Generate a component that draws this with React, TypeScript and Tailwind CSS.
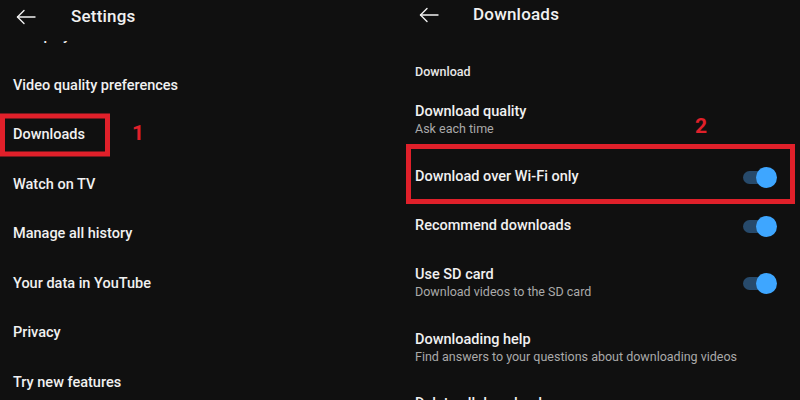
import React from "react";

const font = { fontFamily: "Roboto, 'Noto Sans', Arial, sans-serif" };

function BackArrow() {
  return (
    <svg width="20" height="16" viewBox="0 0 20 16" fill="none" stroke="#f1f1f1" strokeWidth="1.4" strokeLinecap="round" strokeLinejoin="round">
      <path d="M19 8H1.5" />
      <path d="M8 1.5L1.5 8L8 14.5" />
    </svg>
  );
}

function Toggle() {
  return (
    <div className="relative w-[34px] h-[21px] shrink-0">
      <div className="absolute left-0 top-[4px] w-[28px] h-[13px] rounded-full bg-[#274a6b]" />
      <div className="absolute right-0 top-0 w-[21px] h-[21px] rounded-full bg-[#3ea6ff]" />
    </div>
  );
}

const leftRows = [
  "Autoplay",
  "Video quality preferences",
  "Downloads",
  "Watch on TV",
  "Manage all history",
  "Your data in YouTube",
  "Privacy",
  "Try new features",
];

function SettingsPanel() {
  return (
    <div className="relative w-[400px] h-[400px] overflow-hidden bg-[#101010]">
      <div className="relative z-10 h-[41px] bg-[#101010] flex items-start">
        <div className="flex items-center h-[34px] pl-[16px]">
          <BackArrow />
          <span className="ml-[35px] text-[17px] font-medium text-[#f1f1f1] tracking-[0.2px]">Settings</span>
        </div>
      </div>
      <div className="-mt-[30px]">
        {leftRows.map((label) => (
          <div key={label} className="relative h-[49.6px] flex items-center px-[13px]">
            <span className="text-[14.5px] font-medium text-[#f1f1f1]">{label}</span>
            {label === "Downloads" && (
              <>
                <div className="absolute left-0 top-1/2 -translate-y-1/2 w-[110px] h-[43px] border-[5px] border-[#e0202a]" />
                <span className="absolute left-[132px] top-[13px] text-[21px] leading-none font-bold text-[#e0202a]">1</span>
              </>
            )}
          </div>
        ))}
      </div>
    </div>
  );
}

function DownloadsPanel() {
  return (
    <div className="relative w-[400px] h-[400px] overflow-hidden bg-[#101010]">
      <div className="h-[30px] flex items-center pl-[19px]">
        <BackArrow />
        <span className="ml-[34px] text-[17px] font-medium text-[#f1f1f1] tracking-[0.2px]">Downloads</span>
      </div>

      <div className="px-[15px] pt-[34px] h-[50px]">
        <div className="text-[12.5px] leading-[16px] font-medium text-[#e8e8e8]">Download</div>
      </div>

      <div className="relative px-[15px] pt-[23px] h-[72px]">
        <div className="text-[14.5px] leading-[18px] font-medium text-[#f1f1f1]">Download quality</div>
        <div className="text-[12.5px] leading-[16px] text-[#aaaaaa]">Ask each time</div>
        <span className="absolute left-[295px] top-[36px] text-[21px] leading-none font-bold text-[#e0202a]">2</span>
      </div>

      <div className="relative h-[50px] flex items-center justify-between pl-[15px] pr-[23px]">
        <span className="text-[14.5px] font-medium text-[#f1f1f1]">Download over Wi-Fi only</span>
        <Toggle />
        <div className="absolute left-[6px] right-[5px] -top-[8px] h-[60px] border-[5px] border-[#e0202a]" />
      </div>

      <div className="h-[48px] flex items-center justify-between pl-[15px] pr-[23px]">
        <span className="text-[14.5px] font-medium text-[#f1f1f1]">Recommend downloads</span>
        <Toggle />
      </div>

      <div className="h-[66px] flex items-center justify-between pl-[15px] pr-[23px]">
        <div>
          <div className="text-[14.5px] leading-[18px] font-medium text-[#f1f1f1]">Use SD card</div>
          <div className="text-[12.5px] leading-[16px] text-[#aaaaaa]">Download videos to the SD card</div>
        </div>
        <Toggle />
      </div>

      <div className="h-[64px] flex items-center px-[15px]">
        <div>
          <div className="text-[14.5px] leading-[18px] font-medium text-[#f1f1f1]">Downloading help</div>
          <div className="text-[12.5px] leading-[16px] text-[#aaaaaa]">Find answers to your questions about downloading videos</div>
        </div>
      </div>

      <div className="h-[48px] flex items-center px-[15px]">
        <span className="text-[14.5px] font-medium text-[#f1f1f1]">Delete all downloads</span>
      </div>
    </div>
  );
}

export default function App() {
  return (
    <div className="w-[800px] h-[400px] flex bg-[#101010] overflow-hidden" style={font}>
      <SettingsPanel />
      <DownloadsPanel />
    </div>
  );
}
